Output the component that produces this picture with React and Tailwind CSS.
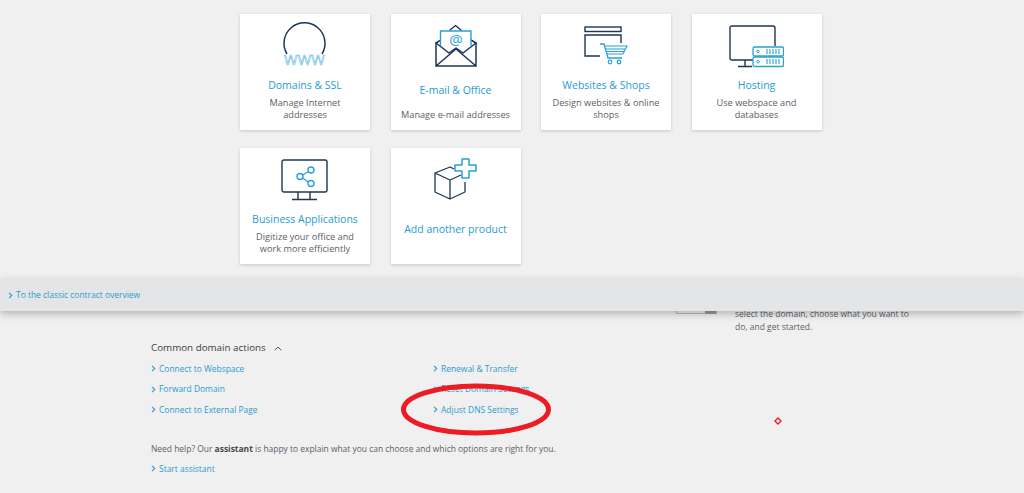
const FONT = "font-['Open_Sans',sans-serif]";

const Navy = "#1d3557";
const Blue = "#29a0d8";

function IconWww() {
  return (
    <svg width="46" height="46" viewBox="0 0 46 46" fill="none" className="overflow-visible">
      <path d="M5 31 A20.5 20.5 0 1 1 40 31" stroke={Navy} strokeWidth="1.5" />
      <text x="22.5" y="42" textAnchor="middle" fontSize="14.5" fontFamily="'Open Sans',sans-serif" fill="#fff" stroke="#4db3e2" strokeWidth="0.55" letterSpacing="0.2">WWW</text>
    </svg>
  );
}
function IconMail() {
  return (
    <svg width="44" height="44" viewBox="0 0 44 44" fill="none" strokeLinejoin="round" strokeLinecap="round">
      <path d="M16 6 L21.5 1.5 L27 6" stroke={Navy} strokeWidth="1.4" />
      <path d="M2 19 V42 H42 V19 L37 16 M7 16 L2 19 M2 42 L22 25 L42 42" stroke={Navy} strokeWidth="1.5" />
      <path d="M7 23 V7 H37 V23 L29 28 L22 24 L16 28 Z" fill="#fff" />
      <path d="M6.5 21 V7 H37 V21" stroke={Blue} strokeWidth="1.4" />
      <path d="M2 19 L15 29 L22 24 L29 29 L42 19" stroke={Navy} strokeWidth="1.5" />
      <text x="22" y="21" textAnchor="middle" fontSize="15" fontFamily="'Open Sans',sans-serif" fill={Blue}>@</text>
    </svg>
  );
}
function IconShop() {
  return (
    <svg width="44" height="40" viewBox="0 0 44 40" fill="none">
      <rect x="1" y="1" width="36" height="4.5" stroke={Navy} strokeWidth="1.4" />
      <path d="M16 30 H1 V9 H37 V17" stroke={Navy} strokeWidth="1.4" />
      <path d="M16 18 H20 L24 32 H38" stroke={Blue} strokeWidth="1.3" />
      <path d="M21 20 H43 L39 28 H23 M22 23 H41 M22.5 25.5 H40" stroke={Blue} strokeWidth="1.1" />
      <circle cx="26" cy="36" r="1.8" stroke={Blue} strokeWidth="1.2" />
      <circle cx="35" cy="36" r="1.8" stroke={Blue} strokeWidth="1.2" />
    </svg>
  );
}
function IconHosting() {
  return (
    <svg width="55" height="43" viewBox="0 0 55 43" fill="none">
      <path d="M24 35 H3 Q1 35 1 33 V3 Q1 1 3 1 H44 Q46 1 46 3 V21" stroke={Navy} strokeWidth="1.4" />
      <path d="M16 35 V41 M9 41.5 H23" stroke={Navy} strokeWidth="1.4" />
      <rect x="24" y="22" width="30.5" height="9" rx="1.5" fill="#fff" stroke={Blue} strokeWidth="1.3" />
      <rect x="24" y="32" width="30.5" height="9.5" rx="1.5" fill="#fff" stroke={Blue} strokeWidth="1.3" />
      <circle cx="29" cy="26.5" r="1.3" stroke={Blue} />
      <circle cx="29" cy="36.7" r="1.3" stroke={Blue} />
      <path d="M38 24 V29 M41 24 V29 M44 24 V29 M47 24 V29 M50 24 V29 M38 34 V39 M41 34 V39 M44 34 V39 M47 34 V39 M50 34 V39" stroke={Blue} strokeWidth="1.1" />
    </svg>
  );
}
function IconShare() {
  return (
    <svg width="48" height="42" viewBox="0 0 48 42" fill="none">
      <rect x="1" y="1" width="45" height="32" rx="2" stroke={Navy} strokeWidth="1.4" />
      <path d="M17 33 V40 M29 33 V40 M11 40.5 H36" stroke={Navy} strokeWidth="1.4" />
      <circle cx="30" cy="11" r="3" stroke={Blue} strokeWidth="1.4" />
      <circle cx="19" cy="17.5" r="3" stroke={Blue} strokeWidth="1.4" />
      <circle cx="30" cy="24.5" r="3" stroke={Blue} strokeWidth="1.4" />
      <path d="M21.6 16 L27.4 12.5 M21.6 19 L27.4 23" stroke={Blue} strokeWidth="1.3" />
    </svg>
  );
}
function IconBox() {
  return (
    <svg width="44" height="44" viewBox="0 0 44 44" fill="none" strokeLinejoin="round">
      <path d="M1 15 L16 9 L20 11 M27 17 L16 22 L1 15 V34 L16 41 L31 34 V24 M16 22 V41" stroke={Navy} strokeWidth="1.3" />
      <path d="M28 1 H35 V7 H42 V13 H35 V20 H28 V13 H21 V7 H28 Z" fill="#fff" stroke={Blue} strokeWidth="1.5" />
    </svg>
  );
}

function Card({ icon, title, desc, variant }) {
  return (
    <div className="w-[130px] h-[116px] bg-white shadow-[0_1px_3px_rgba(0,0,0,0.18)] flex flex-col items-center text-center">
      <div className="h-[54px] mt-[5px] flex items-center justify-center shrink-0">{icon}</div>
      <div className={`text-[10.5px] leading-[15px] text-[#2a9bd1] whitespace-nowrap ${variant === "mail" ? "mt-[10px]" : variant === "add" ? "mt-[15px]" : "mt-[5px]"}`}>{title}</div>
      {desc && (
        <div className={`text-[9.2px] leading-[11.5px] text-[#5c6066] px-1 ${variant === "mail" ? "mt-[11px]" : "mt-[4px]"}`}>{desc}</div>
      )}
    </div>
  );
}

function Chevron() {
  return (
    <svg width="5" height="7" viewBox="0 0 5 7" fill="none">
      <path d="M1 0.8 L3.8 3.5 L1 6.2" stroke="#2a9bd1" strokeWidth="1.1" />
    </svg>
  );
}

function LinkRow({ children }) {
  return (
    <div className="flex items-center gap-[3px] text-[8.45px] leading-[12px] text-[#2a9bd1] whitespace-nowrap">
      <Chevron />
      <span>{children}</span>
    </div>
  );
}

export default function App() {
  return (
    <div className={`${FONT} relative w-[1024px] h-[493px] overflow-hidden bg-[#f0f0f0]`}>
      <div className="pt-[14px] pl-[240px] flex flex-col gap-[18px]">
        <div className="flex gap-[20.5px]">
          <Card icon={<IconWww />} title="Domains & SSL" desc={<>Manage Internet<br />addresses</>} />
          <Card variant="mail" icon={<IconMail />} title="E-mail & Office" desc="Manage e-mail addresses" />
          <Card icon={<IconShop />} title="Websites & Shops" desc={<>Design websites & online<br />shops</>} />
          <Card icon={<IconHosting />} title="Hosting" desc={<>Use webspace and<br />databases</>} />
        </div>
        <div className="flex gap-[20.5px]">
          <Card icon={<IconShare />} title="Business Applications" desc={<>Digitize your office and<br />work more efficiently</>} />
          <Card variant="add" icon={<IconBox />} title="Add another product" />
        </div>
      </div>

      <div className="relative z-10 mt-[15px] h-[32px] bg-[#e4e5e7] shadow-[0_3px_8px_rgba(0,0,0,0.25)] flex items-center pl-[8px]">
        <LinkRow>To the classic contract overview</LinkRow>
      </div>

      <div className="relative pl-[151px] pt-[30px] text-[#5c6066]">
        <div className="flex items-center gap-[8px] text-[9.8px] leading-[14px] text-[#3c4046]">
          <span>Common domain actions</span>
          <svg width="8" height="5" viewBox="0 0 8 5" fill="none">
            <path d="M0.7 4.3 L4 1 L7.3 4.3" stroke="#555" strokeWidth="1" />
          </svg>
        </div>
        <div className="grid grid-cols-[282px_200px] gap-y-[8.5px] mt-[7.5px]">
          <LinkRow>Connect to Webspace</LinkRow>
          <LinkRow>Renewal & Transfer</LinkRow>
          <LinkRow>Forward Domain</LinkRow>
          <LinkRow>Reset Domain Settings</LinkRow>
          <LinkRow>Connect to External Page</LinkRow>
          <LinkRow>Adjust DNS Settings</LinkRow>
        </div>
        <div className="mt-[26px] text-[8.45px] leading-[13px] text-[#5c6066] whitespace-nowrap">
          Need help? Our <b className="font-bold text-[#44484e]">assistant</b> is happy to explain what you can choose and which options are right for you.
        </div>
        <div className="mt-[8px]">
          <LinkRow>Start assistant</LinkRow>
        </div>
        <div className="absolute left-[735px] top-[-3px] w-[178px] text-[8.5px] leading-[12.5px] text-[#5c6066]">
          select the domain, choose what you want to do, and get started.
        </div>
        <div className="absolute left-[676px] top-0 w-[41px] h-[3px] border-b border-x border-[#bbb] flex justify-end">
          <div className="w-[11px] h-[3px] bg-[#999]" />
        </div>
      </div>

      <svg className="absolute left-[400px] top-[382px]" width="152" height="56" viewBox="0 0 152 56" fill="none">
        <ellipse cx="76" cy="27.5" rx="72.5" ry="23.5" stroke="#ed1c24" strokeWidth="5" />
      </svg>
      <svg className="absolute left-[774px] top-[417px]" width="8" height="8" viewBox="0 0 8 8" fill="none">
        <path d="M4 1 L7 4 L4 7 L1 4 Z" stroke="#ed1c24" strokeWidth="1.4" />
      </svg>
    </div>
  );
}
